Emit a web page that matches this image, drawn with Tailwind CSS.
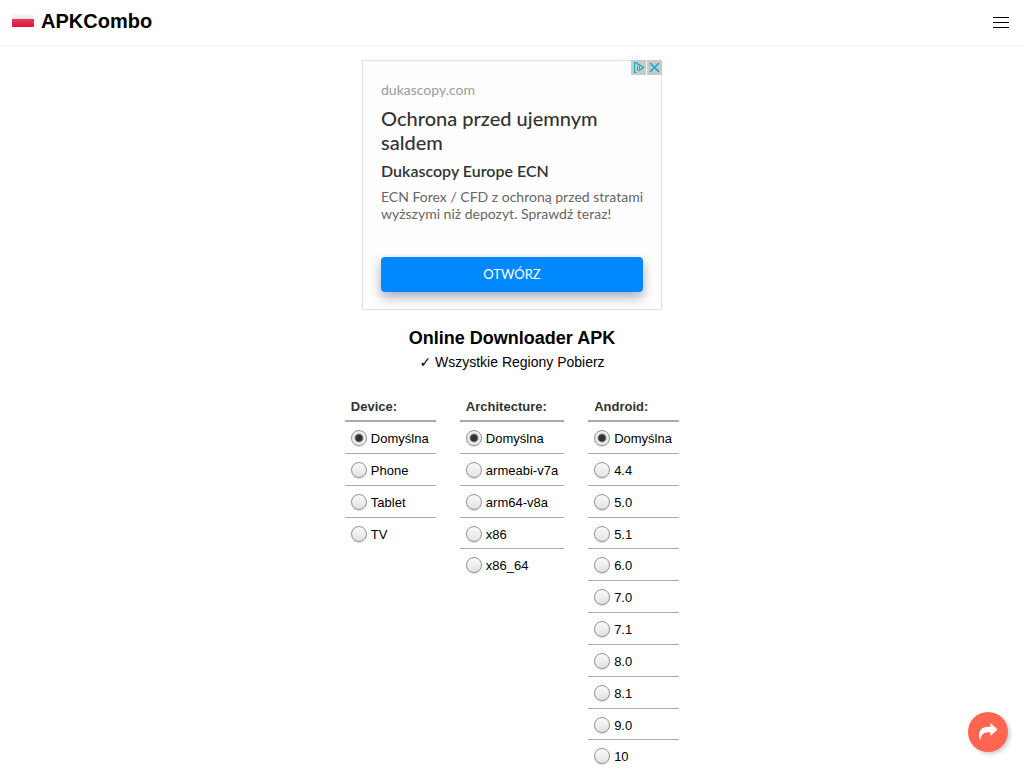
<!DOCTYPE html>
<html lang="pl">
<head>
<meta charset="utf-8">
<meta name="viewport" content="width=device-width, initial-scale=1">
<title>APKCombo – Online Downloader APK</title>
<script src="https://cdn.jsdelivr.net/npm/@tailwindcss/browser@4"></script>
</head>
<body class="bg-white font-['Liberation_Sans',Arial,sans-serif] text-black overflow-x-hidden">
<header class="flex h-[47px] items-center justify-between border-b-2 border-[#f7f7f7] px-3">
  <a href="#" class="flex items-center gap-[7px] pb-[3px] text-xl font-bold leading-6">
    <svg class="h-[14px] w-[22px]" viewBox="0 0 22 14" aria-hidden="true">
      <defs>
        <linearGradient id="fw" x2="0" y2="1"><stop stop-color="#fafafa"/><stop offset="1" stop-color="#e6e6e6"/></linearGradient>
        <linearGradient id="fr" x2="0" y2="1"><stop stop-color="#e8385a"/><stop offset="1" stop-color="#dc143c"/></linearGradient>
      </defs>
      <path d="M0 5V1q0-1 1-1h20q1 0 1 1v4z" fill="url(#fw)"/>
      <path d="M0 5h22v7q0 1-1 1H1q-1 0-1-1z" fill="url(#fr)"/>
    </svg>
    <span>APKCombo</span>
  </a>
  <button type="button" aria-label="Menu" class="flex w-[22px] flex-col items-center gap-1">
    <span class="h-px w-4 bg-black"></span><span class="h-px w-4 bg-black"></span><span class="h-px w-4 bg-black"></span>
  </button>
</header>

<main class="flex flex-col items-center pt-[13px]">
  <section aria-label="Reklama" class="relative h-[250px] w-[300px] max-w-full border border-[#e0e0e0] bg-[#fefefe] px-[18px] pt-[19px] font-['Lato',sans-serif]">
    <div class="absolute -top-px -right-px flex gap-px">
      <button type="button" aria-label="Informacje o reklamie" class="flex size-[15px] items-center justify-center bg-[#c9c9c9]">
        <svg class="size-[15px]" viewBox="0 0 15 15" fill="none" stroke="#00aecd" stroke-width="1.100" stroke-linejoin="round"><path d="M5.500 12.500H3.500V2.500H5L12.500 7.500 7.500 11"/><path d="M6.500 6.500v4M6.500 4.300v1M8.500 5.500v4" stroke-width="1"/></svg>
      </button>
      <button type="button" aria-label="Zamknij" class="flex size-[15px] items-center justify-center bg-[#c9c9c9]">
        <svg class="size-[15px]" viewBox="0 0 15 15" fill="none" stroke="#00aecd" stroke-width="1.500"><path d="M3 3l9 9M12 3l-9 9"/></svg>
      </button>
    </div>
    <p class="text-[14px] leading-5 text-[#9a9a9a]">dukascopy.com</p>
    <h2 class="mt-[6px] text-xl font-medium leading-6 text-[#333]">Ochrona przed ujemnym saldem</h2>
    <h3 class="mt-[7px] text-base font-semibold leading-5 text-[#333]">Dukascopy Europe ECN</h3>
    <p class="mt-[7px] text-[14px] leading-[17px] text-[#666]">ECN Forex / CFD z ochroną przed stratami wyższymi niż depozyt. Sprawdź teraz!</p>
    <button type="button" class="mt-[35px] h-[35px] w-full rounded bg-[#0088ff] text-[13px] text-white shadow-[0_5px_12px_rgba(40,40,70,0.4)]">OTWÓRZ</button>
  </section>

  <h1 class="mt-4 text-lg font-bold leading-6">Online Downloader APK</h1>
  <p class="text-sm leading-6"><span class="font-['DejaVu_Sans',sans-serif]">✓</span> Wszystkie Regiony Pobierz</p>

  <form class="mt-5 flex items-start justify-center gap-6 text-[13px] leading-[1.45]
    [&_h4]:border-b-2 [&_h4]:border-[#aaa] [&_h4]:px-1.5 [&_h4]:py-[3px] [&_h4]:font-bold [&_h4]:leading-5 [&_h4]:text-[#333]
    [&_label]:flex [&_label]:items-start [&_label]:gap-1 [&_label]:border-b [&_label]:border-[#aaa] [&_label]:px-1.5 [&_label]:pt-2 [&_label]:pb-1 [&_label:last-child]:border-b-0
    [&_input]:size-4 [&_input]:shrink-0 [&_input]:appearance-none [&_input]:rounded-full [&_input]:border [&_input]:border-[#94948e] [&_input]:bg-[linear-gradient(#fafafa,#e2e2e2)] [&_input]:shadow-[0_1px_1px_rgba(0,0,0,0.15)]
    [&_input:checked]:bg-[radial-gradient(circle,#2e3436_3px,#eeeeee_5px)]!">
    <div role="radiogroup" aria-labelledby="dev" class="min-w-[91px]">
      <h4 id="dev">Device:</h4>
      <label><input type="radio" name="device" checked><span>Domyślna</span></label>
      <label><input type="radio" name="device"><span>Phone</span></label>
      <label><input type="radio" name="device"><span>Tablet</span></label>
      <label><input type="radio" name="device"><span>TV</span></label>
    </div>
    <div role="radiogroup" aria-labelledby="arch" class="min-w-[104px]">
      <h4 id="arch">Architecture:</h4>
      <label><input type="radio" name="arch" checked><span>Domyślna</span></label>
      <label><input type="radio" name="arch"><span>armeabi-v7a</span></label>
      <label><input type="radio" name="arch"><span>arm64-v8a</span></label>
      <label><input type="radio" name="arch"><span>x86</span></label>
      <label><input type="radio" name="arch"><span>x86_64</span></label>
    </div>
    <div role="radiogroup" aria-labelledby="andr" class="min-w-[91px]">
      <h4 id="andr">Android:</h4>
      <label><input type="radio" name="android" checked><span>Domyślna</span></label>
      <label><input type="radio" name="android"><span>4.4</span></label>
      <label><input type="radio" name="android"><span>5.0</span></label>
      <label><input type="radio" name="android"><span>5.1</span></label>
      <label><input type="radio" name="android"><span>6.0</span></label>
      <label><input type="radio" name="android"><span>7.0</span></label>
      <label><input type="radio" name="android"><span>7.1</span></label>
      <label><input type="radio" name="android"><span>8.0</span></label>
      <label><input type="radio" name="android"><span>8.1</span></label>
      <label><input type="radio" name="android"><span>9.0</span></label>
      <label><input type="radio" name="android"><span>10</span></label>
    </div>
  </form>
</main>

<button type="button" aria-label="Udostępnij" class="fixed right-4 bottom-4 flex size-10 items-center justify-center rounded-full bg-[#ff6550] shadow-[2px_2px_4px_rgba(0,0,0,0.2)]">
  <svg class="h-[18px] w-5" viewBox="0 0 20 18" fill="#fff"><path d="M12.500 0L19.500 6.500 12.500 13V9.500C7 8.800 3 10.500 2.500 17.500 .5 14 .3 10 2.500 7 5 3.800 8.500 3.500 12.500 4z"/></svg>
</button>
</body>
</html>
